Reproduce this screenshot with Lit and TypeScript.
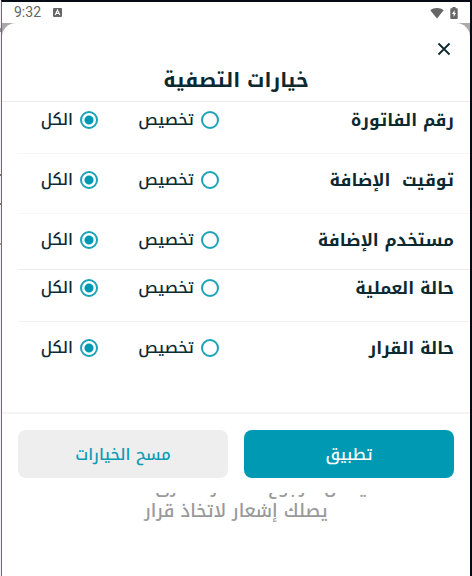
import { LitElement, html, css } from "lit";
import { customElement, property } from "lit/decorators.js";
import { classMap } from "lit/directives/class-map.js";

interface Field {
  id: string;
  label: string;
  leading?: boolean;
  closing?: boolean;
}

// Each group of fields starts with a tighter row and is closed by a stronger rule.
const FIELDS: Field[] = [
  { id: "invoice", label: "رقم الفاتورة", leading: true },
  { id: "time", label: "توقيت \u00a0الإضافة" },
  { id: "user", label: "مستخدم الإضافة", closing: true },
  { id: "operation", label: "حالة العملية", leading: true },
  { id: "decision", label: "حالة القرار" },
];

@customElement("filter-row")
class FilterRow extends LitElement {
  @property() name = "";
  @property() label = "";

  static styles = css`
    :host {
      display: block;
    }
    .row {
      display: grid;
      grid-template-columns: minmax(0, 1fr) 121px 80px;
      align-items: center;
      font-size: 17px;
      line-height: 24px;
      white-space: nowrap;
    }
    .label {
      font-weight: 700;
    }
    .option {
      display: flex;
      align-items: center;
      gap: 7px;
      height: 24px;
      font-size: 16px;
      font-weight: 500;
    }
    .radio {
      appearance: none;
      flex: none;
      box-sizing: border-box;
      width: 18px;
      height: 18px;
      margin: 0;
      border: 2px solid #1ba3b9;
      border-radius: 50%;
      background: #fff;
    }
    .radio:checked {
      background: radial-gradient(circle, #0099b3 0 4px, #fff 5px);
    }
  `;

  render() {
    return html`
      <div class="row" role="radiogroup" aria-labelledby="title">
        <span class="label" id="title">${this.label}</span>
        <label class="option"><input class="radio" type="radio" name=${this.name} />تخصيص</label>
        <label class="option"><input class="radio" type="radio" name=${this.name} checked />الكل</label>
      </div>
    `;
  }
}

@customElement("app-root")
class AppRoot extends LitElement {
  static styles = css`
    :host {
      display: block;
      font-family: "Noto Kufi Arabic", "Noto Sans Arabic", "DejaVu Sans", sans-serif;
      color: #0c2830;
    }
    .frame {
      display: grid;
      grid-template-columns: 1px minmax(0, 1fr);
      min-height: 100vh;
    }
    .edge {
      background: linear-gradient(
        #eef0f1 0 28px, #8a8e99 28px 32px, #eef0f1 32px 174px,
        #777 174px 176px, #eef0f1 176px 203px, #777 203px 205px,
        #eef0f1 205px 243px, #999 243px 245px, #eef0f1 245px
      );
    }
    .screen {
      border: solid #060a14;
      border-width: 2px 2px 0 1px;
      border-left-color: #517a74;
      background: #fff;
    }
    .status {
      display: flex;
      align-items: center;
      height: 21px;
      padding: 0 12px;
      font: 14px/21px Roboto, sans-serif;
      color: #666;
    }
    .keyboard {
      margin-left: 12px;
    }
    .wifi {
      margin-left: auto;
      margin-right: 6px;
    }
    .icon {
      display: block;
    }
    .backdrop {
      background: linear-gradient(#aaa 0 40px, #fff 40px);
    }
    .sheet {
      background: #fff;
      border-radius: 14px 14px 0 0;
    }
    .top {
      display: flex;
      justify-content: flex-end;
      padding: 16px 16px 0;
    }
    .close {
      width: 20px;
      height: 20px;
      padding: 0;
      border: 0;
      background: none;
      color: #0c2830;
    }
    .title {
      margin: 0;
      font-size: 20px;
      font-weight: 700;
      line-height: 42px;
      text-align: center;
      border-bottom: 1px solid #ececee;
    }
    .fields {
      padding-bottom: 31px;
    }
    .item {
      margin-left: 16px;
      padding: 14px 0 21px;
      border-bottom: 1px solid #f6f6f6;
    }
    .item.leading {
      padding-top: 6px;
    }
    .item.closing {
      padding-bottom: 17px;
      border-bottom-color: #ececec;
    }
    .item.leading:not(:first-child) {
      border-bottom-color: #f0f0f0;
    }
    .item:last-child {
      border-bottom: 0;
    }
    .cell {
      display: block;
      margin-right: 16px;
    }
    .footer {
      display: grid;
      grid-template-columns: 1fr 1fr;
      gap: 16px;
      padding: 16px 16px 15px;
      border-top: 2px solid #f4f4f4;
    }
    .button {
      height: 48px;
      padding: 0;
      border: 0;
      border-radius: 8px;
      font-family: inherit;
      font-size: 16px;
      font-weight: 500;
    }
    .apply {
      background: #0099b3;
      color: #fff;
    }
    .clear {
      background: #eee;
      color: #0c9cb5;
    }
    .behind {
      font-size: 18px;
      font-weight: 500;
      line-height: 24px;
      text-align: center;
      color: #999;
    }
    .covered {
      display: flex;
      flex-direction: column;
      justify-content: flex-end;
      height: 6px;
      overflow: hidden;
    }
    .message {
      margin: 0;
    }
  `;

  render() {
    return html`
      <div class="frame">
        <div class="edge"></div>
        <main class="screen">
          <div class="status">
            <span>9:32</span>
            <svg class="icon keyboard" width="9" height="9" viewBox="0 0 9 9" aria-hidden="true">
              <rect width="9" height="9" rx="1" fill="#666" />
              <path d="M2.2 7 4.5 2 6.8 7M3.2 5.4h2.6" fill="none" stroke="#fff" stroke-width="1.1" />
            </svg>
            <svg class="icon wifi" width="14" height="12" viewBox="0 0 14 12" aria-hidden="true">
              <path d="M7 11.5 .3 3.2C4 .3 10 .3 13.7 3.2Z" fill="#666" />
            </svg>
            <svg class="icon" width="8" height="12" viewBox="0 0 8 12" aria-hidden="true">
              <path d="M2.5 0h3v1.200H7q.7 0 .7.7v9.400q0 .7-.7.7H1q-.7 0-.7-.7V1.900q0-.7.7-.7h1.500Z" fill="#666" />
              <path d="M4.600 3 2 7h1.600v3L6 6H4.600Z" fill="#fff" />
            </svg>
          </div>
          <div class="backdrop">
            <section class="sheet" dir="rtl">
              <div class="top" dir="ltr">
                <button class="close" aria-label="إغلاق">
                  <svg class="icon" width="20" height="20" viewBox="0 0 20 20" aria-hidden="true">
                    <path d="M4.500 4.500 15.500 15.500M15.500 4.500 4.500 15.500" stroke="currentColor" stroke-width="1.800" />
                  </svg>
                </button>
              </div>
              <h1 class="title">خيارات التصفية</h1>
              <div class="fields">
                ${FIELDS.map(
                  (f) => html`
                    <div class=${classMap({ item: true, leading: !!f.leading, closing: !!f.closing })}>
                      <filter-row class="cell" .name=${f.id} .label=${f.label}></filter-row>
                    </div>
                  `
                )}
              </div>
              <div class="footer">
                <button class="button apply">تطبيق</button>
                <button class="button clear">مسح الخيارات</button>
              </div>
            </section>
          </div>
          <div class="behind" dir="rtl">
            <div class="covered"><span>يمكن الرجوع هنا مرة أخرى عندما</span></div>
            <p class="message">يصلك إشعار لاتخاذ قرار</p>
          </div>
        </main>
      </div>
    `;
  }
}
